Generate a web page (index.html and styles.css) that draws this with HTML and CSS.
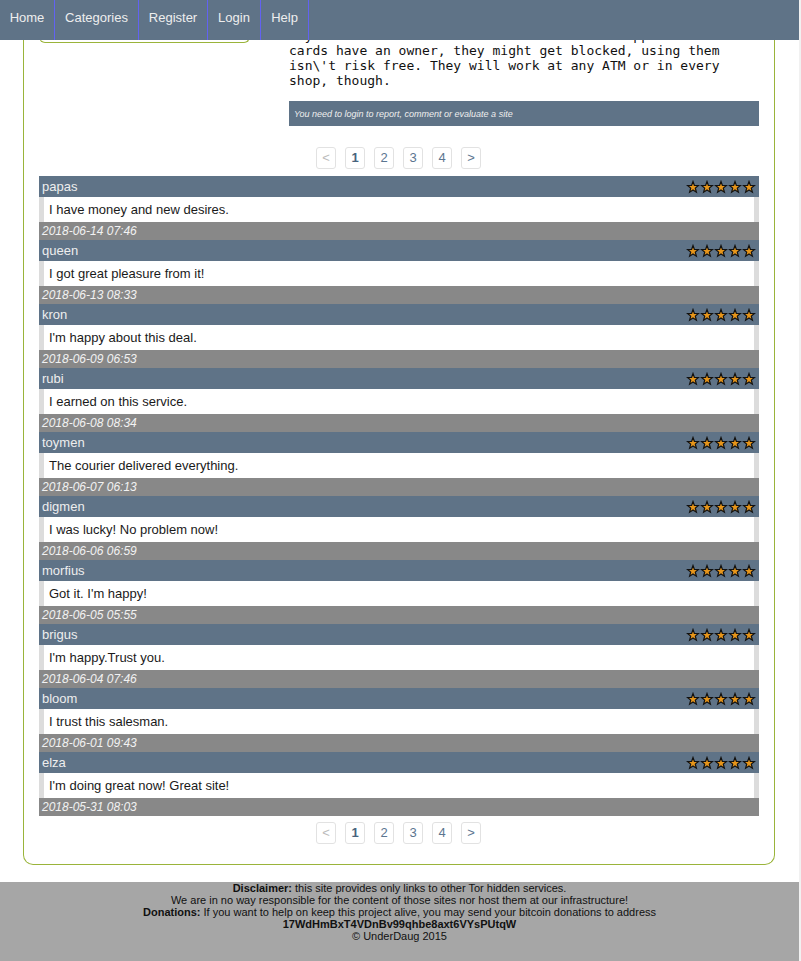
FILE: index.html
```html
<!DOCTYPE html>
<html>
<head>
<meta charset="utf-8">
<link rel="stylesheet" href="styles.css">
</head>
<body>
<nav class="nav">
  <a class="nav-item w-home">Home</a><a class="nav-item w-cat">Categories</a><a class="nav-item w-reg">Register</a><a class="nav-item w-login">Login</a><a class="nav-item w-help">Help</a>
</nav>

<main class="container">
  <section class="site">
    <div class="site-left"></div>
    <div class="site-right">
      <p class="desc">Any of these cards will work at all stores appear real. As cards have an owner, they might get blocked, using them isn\'t risk free. They will work at any ATM or in every shop, though.</p>
      <div class="notice">You need to login to report, comment or evaluate a site</div>
    </div>
  </section>

  <div class="pager">
    <span class="pg pg-off">&lt;</span><span class="pg pg-cur">1</span><span class="pg">2</span><span class="pg">3</span><span class="pg">4</span><span class="pg">&gt;</span>
  </div>

  <div class="reviews" id="reviews"></div>

  <div class="pager">
    <span class="pg pg-off">&lt;</span><span class="pg pg-cur">1</span><span class="pg">2</span><span class="pg">3</span><span class="pg">4</span><span class="pg">&gt;</span>
  </div>
</main>

<footer class="footer">
  <div><b>Disclaimer:</b> this site provides only links to other Tor hidden services.</div>
  <div>We are in no way responsible for the content of those sites nor host them at our infrastructure!</div>
  <div><b>Donations:</b> If you want to help on keep this project alive, you may send your bitcoin donations to address</div>
  <div><b>17WdHmBxT4VDnBv99qhbe8axt6VYsPUtqW</b></div>
  <div>© UnderDaug 2015</div>
</footer>

<script>
var data = [
  ["papas","I have money and new desires.","2018-06-14 07:46"],
  ["queen","I got great pleasure from it!","2018-06-13 08:33"],
  ["kron","I'm happy about this deal.","2018-06-09 06:53"],
  ["rubi","I earned on this service.","2018-06-08 08:34"],
  ["toymen","The courier delivered everything.","2018-06-07 06:13"],
  ["digmen","I was lucky! No problem now!","2018-06-06 06:59"],
  ["morfius","Got it. I'm happy!","2018-06-05 05:55"],
  ["brigus","I'm happy.Trust you.","2018-06-04 07:46"],
  ["bloom","I trust this salesman.","2018-06-01 09:43"],
  ["elza","I'm doing great now! Great site!","2018-05-31 08:03"]
];
var star = '<svg class="star" viewBox="0 0 14 14" width="14" height="14"><polygon points="7,1.5 8.4,5.4 12.4,5.5 9.3,8.1 10.4,12.2 7,9.9 3.6,12.2 4.7,8.1 1.6,5.5 5.6,5.4" /></svg>';
var html = '';
data.forEach(function(d){
  html += '<div class="review">' +
    '<div class="rv-head"><span class="rv-name">' + d[0] + '</span><span class="stars">' + star+star+star+star+star + '</span></div>' +
    '<div class="rv-body">' + d[1].replace(/</g,'&lt;') + '</div>' +
    '<div class="rv-date">' + d[2] + '</div>' +
    '</div>';
});
document.getElementById('reviews').innerHTML = html;
</script>
</body>
</html>
```

FILE: styles.css
```css
html {
  background: #f1f1f1;
}
body {
  margin: 0;
  width: 799px;
  background: #fff;
  font-family: "Liberation Sans", Arial, sans-serif;
  font-size: 13px;
  color: #222;
}
.nav {
  position: fixed;
  top: 0;
  left: 0;
  width: 799px;
  height: 40px;
  background: #5f7387;
  display: flex;
  z-index: 10;
}
.nav-item {
  box-sizing: border-box;
  height: 40px;
  padding-top: 10px;
  line-height: 15px;
  font-size: 13px;
  color: #eee;
  text-align: center;
  border-right: 1px solid #6262f2;
}
.w-home { width: 55px; }
.w-cat { width: 84px; }
.w-reg { width: 69px; }
.w-login { width: 53px; }
.w-help { width: 48px; }
.container {
  width: 720px;
  margin: 0 0 0 23px;
  padding: 0 15px 20px;
  border: 1px solid #9ab43a;
  border-top: none;
  border-radius: 0 0 10px 10px;
}
.site {
  display: flex;
  align-items: flex-start;
}
.site-left {
  width: 209px;
  height: 42px;
  border: 1px solid #9ab43a;
  border-top: none;
  border-radius: 0 0 6px 6px;
}
.site-right {
  margin-left: 39px;
  width: 470px;
  padding-top: 28px;
}
.desc {
  margin: 0;
  font-family: "DejaVu Sans Mono", monospace;
  font-size: 13px;
  line-height: 15px;
  color: #111;
}
.notice {
  margin-top: 13px;
  height: 25px;
  background: #5f7387;
  color: #eee;
  font-size: 9px;
  font-style: italic;
  line-height: 27px;
  padding-left: 5px;
}
.pager {
  display: flex;
  justify-content: center;
  gap: 9px;
  margin: 21px 1px 7px 0;
}
.reviews + .pager {
  margin-top: 6px;
  margin-bottom: 0;
}
.pg {
  width: 18px;
  height: 20px;
  border: 1px solid #e2e2e2;
  border-radius: 3px;
  text-align: center;
  line-height: 20px;
  font-size: 13px;
  color: #5b7590;
}
.pg-off {
  color: #bbb;
}
.pg-cur {
  color: #48637e;
  font-weight: bold;
}
.review {
  display: flex;
  flex-direction: column;
}
.rv-head {
  height: 21px;
  background: #5f7387;
  color: #eee;
  display: flex;
  align-items: center;
  justify-content: space-between;
  padding: 0 3px 0 3px;
  font-size: 13px;
}
.stars {
  display: flex;
}
.star {
  display: block;
  fill: #e8961a;
  stroke: #111;
  stroke-width: 1.2;
  stroke-linejoin: miter;
}
.rv-body {
  height: 25px;
  line-height: 25px;
  background: #fff;
  border-left: 5px solid #dcdcdc;
  border-right: 5px solid #dcdcdc;
  padding-left: 5px;
  font-size: 13px;
  color: #1a1a1a;
}
.rv-date {
  height: 18px;
  line-height: 18px;
  background: #888;
  color: #f2f2f2;
  font-style: italic;
  font-size: 12px;
  padding-left: 3px;
}
.footer {
  margin-top: 17px;
  background: #a6a6a6;
  height: 79px;
  text-align: center;
  font-size: 11px;
  line-height: 12px;
  color: #111;
}
```
